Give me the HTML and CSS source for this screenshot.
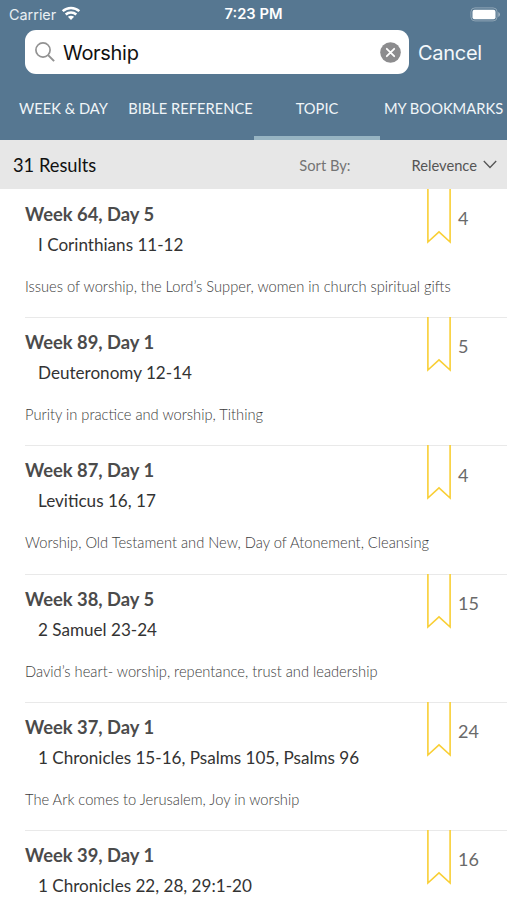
FILE: index.html
```html
<!DOCTYPE html>
<html lang="en">
<head>
<meta charset="utf-8">
<title>Topic search</title>
<link rel="stylesheet" href="styles.css">
</head>
<body>
<header class="header">
  <div class="status">
    <div class="carrier"><span>Carrier</span>
      <svg class="wifi" width="20" height="15" viewBox="0 0 20 15" fill="none" stroke="#fff" stroke-width="2.5"><path d="M1.7 5.2C6.3.9 13.7.9 18.3 5.2M4.7 8.5c3-2.7 7.6-2.7 10.6 0"/><path d="M10 14 6.9 10.8c1.8-1.5 4.4-1.5 6.2 0z" fill="#fff" stroke="none"/></svg>
    </div>
    <span class="clock">7:23 PM</span>
    <svg class="battery" width="31" height="15" viewBox="0 0 31 15"><rect x=".9" y=".9" width="26.2" height="13" rx="4" fill="none" stroke="#8fa5b5"/><rect x="2.5" y="2.7" width="23" height="9.5" rx="2" fill="#fff"/><path d="M28.4 5v5q1.5-.8 1.5-2.5T28.4 5" fill="#a9bac7"/></svg>
  </div>
  <div class="search">
    <div class="field">
      <svg width="20" height="20" viewBox="0 0 20 20" fill="none" stroke="#929292" stroke-width="1.7"><circle cx="8" cy="8" r="7.1"/><path d="m13.1 13.1 6 6" stroke-width="2"/></svg>
      <span class="query">Worship</span>
      <svg class="clear" width="21" height="21" viewBox="0 0 21 21"><circle cx="10.5" cy="10.5" r="10.3" fill="#8c8c8e"/><path d="m6.8 6.8 7.4 7.4m0-7.4-7.4 7.4" stroke="#fff" stroke-width="1.8" stroke-linecap="round"/></svg>
    </div>
    <span class="cancel">Cancel</span>
  </div>
  <nav class="tabs">
    <span class="tab">WEEK &amp; DAY</span>
    <span class="tab">BIBLE REFERENCE</span>
    <span class="tab active">TOPIC</span>
    <span class="tab">MY BOOKMARKS</span>
  </nav>
</header>
<div class="summary">
  <span class="count">31 Results</span>
  <span class="sort">Sort By:</span>
  <span class="order">Relevence</span>
  <svg width="14" height="9" viewBox="0 0 14 9" fill="none" stroke="#555" stroke-width="1.3"><path d="m.8 1 6.2 6.5L13.2 1"/></svg>
</div>
<main class="list">
  <article class="row"><div class="text"><h2>Week 64, Day 5</h2><p class="passage">I Corinthians 11-12</p><p class="topic">Issues of worship, the Lord’s Supper, women in church spiritual gifts</p></div><svg class="ribbon" viewBox="0 0 26 55"><path d="M1.9-2V53L13 42.8 24.1 53V-2"/></svg><span class="num">4</span></article>
  <article class="row"><div class="text"><h2>Week 89, Day 1</h2><p class="passage">Deuteronomy 12-14</p><p class="topic">Purity in practice and worship, Tithing</p></div><svg class="ribbon" viewBox="0 0 26 55"><path d="M1.9-2V53L13 42.8 24.1 53V-2"/></svg><span class="num">5</span></article>
  <article class="row"><div class="text"><h2>Week 87, Day 1</h2><p class="passage">Leviticus 16, 17</p><p class="topic">Worship, Old Testament and New, Day of Atonement, Cleansing</p></div><svg class="ribbon" viewBox="0 0 26 55"><path d="M1.9-2V53L13 42.8 24.1 53V-2"/></svg><span class="num">4</span></article>
  <article class="row"><div class="text"><h2>Week 38, Day 5</h2><p class="passage">2 Samuel 23-24</p><p class="topic">David’s heart- worship, repentance, trust and leadership</p></div><svg class="ribbon" viewBox="0 0 26 55"><path d="M1.9-2V53L13 42.8 24.1 53V-2"/></svg><span class="num">15</span></article>
  <article class="row"><div class="text"><h2>Week 37, Day 1</h2><p class="passage">1 Chronicles 15-16, Psalms 105, Psalms 96</p><p class="topic">The Ark comes to Jerusalem, Joy in worship</p></div><svg class="ribbon" viewBox="0 0 26 55"><path d="M1.9-2V53L13 42.8 24.1 53V-2"/></svg><span class="num">24</span></article>
  <article class="row last"><div class="text"><h2>Week 39, Day 1</h2><p class="passage">1 Chronicles 22, 28, 29:1-20</p></div><svg class="ribbon" viewBox="0 0 26 55"><path d="M1.9-2V53L13 42.8 24.1 53V-2"/></svg><span class="num">16</span></article>
</main>
</body>
</html>
```
FILE: styles.css
```css
* { box-sizing: border-box; }
body { margin: 0; background: #fff; font-family: Lato, sans-serif; white-space: nowrap; }
svg { flex: none; display: block; }
h2, p { margin: 0; }
.header { height: 140px; background: #567791; color: #fff; display: flex; flex-direction: column; }
.status { height: 30px; padding: 0 4px 3px 9px; display: grid; grid-template-columns: 1fr auto 1fr; align-items: center; font-family: Inter, sans-serif; font-size: 14.4px; line-height: 27px; }
.carrier { display: flex; gap: 5px; align-items: center; color: #e9eff3; }
.wifi { margin-top: -1px; }
.clock { font-weight: 600; font-size: 14.7px; margin-right: 5px; padding-top: 1px; }
.battery { justify-self: end; margin-right: 2px; }
.search { height: 44px; display: flex; align-items: center; padding-left: 25px; font-family: Inter, sans-serif; }
.field { width: 384px; height: 44px; border-radius: 11px; background: #fff; display: flex; align-items: center; padding: 0 8px 0 10px; }
.query { margin: 1px 0 0 8px; color: #111; font-size: 20px; letter-spacing: -.3px; }
.clear { margin-left: auto; }
.cancel { margin: 1px 0 0 9px; font-size: 20px; letter-spacing: -.3px; color: #f3f8fb; }
.tabs { height: 66px; display: grid; grid-template-columns: 127px 127px 126px 127px; font-size: 14.7px; line-height: 69px; color: #f0f5f8; }
.tab { display: flex; justify-content: center; height: 66px; }
.active { border-bottom: 4px solid #97b4c2; }
.summary { height: 49px; background: #e7e7e7; display: flex; align-items: center; padding: 0 10px 0 13px; color: #111; font-size: 18.3px; }
.sort { margin-left: auto; color: #747474; font-size: 14.7px; }
.order { margin: 0 6px 0 61px; color: #555; font-size: 14.7px; }
.row { height: 128.2px; margin-left: 25px; display: flex; color: #444; }
.last { height: 69px; }
.row + .row { background: linear-gradient(#e9e9e9, #e9e9e9) 0 0 / 100% 1px no-repeat; }
.text { width: 401px; flex: none; padding-top: 13px; }
h2 { font-size: 18.35px; line-height: 24px; font-weight: 700; color: #4b4b4b; }
.passage { padding-left: 13px; margin-top: 7px; font-size: 17.1px; line-height: 24px; color: #333; }
.topic { margin-top: 18px; font-size: 14.7px; line-height: 22px; font-weight: 300; color: #3c3c3c; }
.ribbon { width: 26px; height: 55px; fill: none; stroke: #f9cf35; stroke-width: 1.6; }
.num { flex: 1; padding: 17.3px 0 0 6px; font-size: 18px; line-height: 24px; color: #6a6a6a; }
```
